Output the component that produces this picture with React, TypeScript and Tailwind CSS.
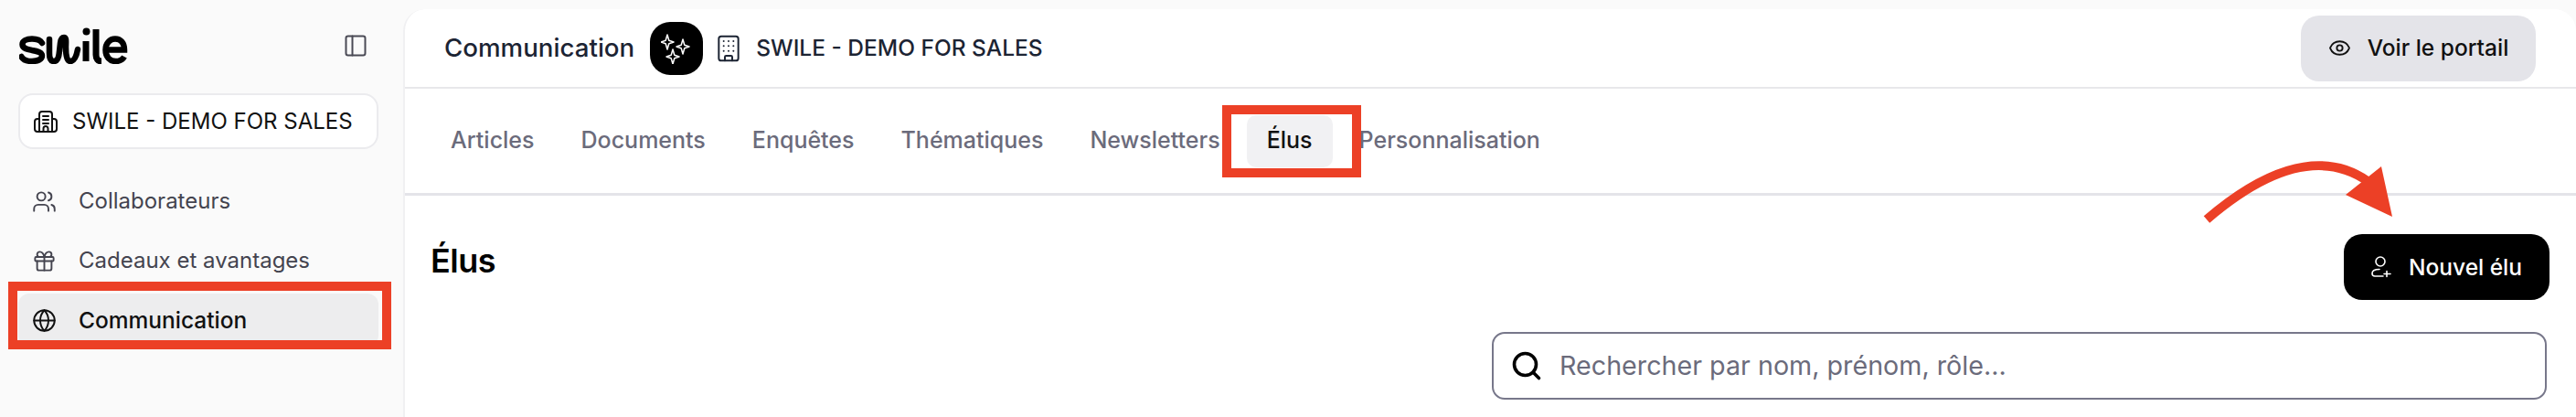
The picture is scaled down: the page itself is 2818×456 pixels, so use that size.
import { Users, Gift, Globe, Eye, Building, PanelLeft, Search } from "lucide-react";

function Logo() {
  return (
    <svg width="119" height="40" viewBox="0 0 119 40" fill="none" stroke="#000" strokeWidth="6.5" strokeLinecap="round">
      <path d="M25 17 C23 13.5 19 12.5 14 12.5 C8 12.5 3.5 14.5 3.5 18.5 C3.5 23 9 24 14 25 C20 26 25 27 25 31 C25 35 20 37 14 37 C9 37 4.5 35.5 2.5 32" />
      <path d="M33 13 L33 28 C33 34 35 37 38 37 C42 37 43.5 32 44 26 L45 17 C45.5 13 47 11 49 11 C52 11 51 16 51 22 C51 30 52 37 56 37 C60 37 62.5 32 64 24" />
      <path d="M73 15 L73 37" strokeLinecap="butt" strokeWidth="7" />
      <circle cx="73.5" cy="4.5" r="4" fill="#000" stroke="none" />
      <path d="M84 2 L84 30 C84 34 86 37 90 37" strokeLinecap="butt" strokeWidth="7" />
      <path d="M95 24.5 L115 24.5 C115 17 111 12.5 105 12.5 C99 12.5 94.5 17.5 94.5 24.5 C94.5 32 99 37 105.5 37 C110 37 113 35.5 115 32" strokeLinecap="butt" />
    </svg>
  );
}

function OrgIcon() {
  return (
    <svg width="26" height="24" viewBox="0 0 26 24" fill="none" stroke="#111" strokeWidth="2" strokeLinecap="round" strokeLinejoin="round">
      <path d="M6 23 V4 a3 3 0 0 1 3-3 h8 a3 3 0 0 1 3 3 V23" />
      <path d="M6 9 H4 a3 3 0 0 0-3 3 v8 a3 3 0 0 0 3 3 h18 a3 3 0 0 0 3-3 v-8 a3 3 0 0 0-3-3 h-2" />
      <path d="M10 6 h6 M10 10 h6 M10 14 h6 M10.5 23 v-3.5 a2.5 2.5 0 0 1 5 0 V23" />
    </svg>
  );
}

function Sparks() {
  const star = "M0 -8 L1.8 -1.8 L7 0 L1.8 1.8 L0 8 L-1.8 1.8 L-7 0 L-1.8 -1.8 Z";
  return (
    <svg width="34" height="34" viewBox="0 0 34 34" fill="none" stroke="#fff" strokeWidth="1.5" strokeLinejoin="round">
      <path d={star} transform="translate(7 10)" />
      <path d={star} transform="translate(24 15)" />
      <path d={star} transform="translate(13 26)" />
    </svg>
  );
}

function UserAdd() {
  return (
    <svg width="22" height="24" viewBox="0 0 22 24" fill="none" stroke="#fff" strokeWidth="1.6" strokeLinecap="round">
      <circle cx="10" cy="6" r="5" />
      <path d="M13 22 H4 C1.5 22 1 20.5 1 19 C1 16 4 14.5 9 14.5" />
      <path d="M17 16.5 V22.5 M14 19.5 H21" />
    </svg>
  );
}

const tabs = ["Articles", "Documents", "Enquêtes", "Thématiques", "Newsletters", "Élus", "Personnalisation"];

export default function App() {
  return (
    <div className="relative flex h-[456px] w-[2818px] overflow-hidden bg-[#fafafa] font-['Inter',sans-serif]">
      <aside className="flex w-[441px] shrink-0 flex-col pl-[20px] pr-[27px] pt-[30px]">
        <div className="flex h-[40px] items-center justify-between pl-px pr-[11px]">
          <Logo />
          <PanelLeft size={28} strokeWidth={1.7} className="text-[#4a4a55]" />
        </div>
        <button className="mt-[32px] flex h-[61px] items-center gap-[16px] rounded-[16px] border-2 border-[#ebebee] bg-white pl-[15px] text-[24px] text-[#111]">
          <OrgIcon />
          <span className="whitespace-nowrap">SWILE - DEMO FOR SALES</span>
        </button>
        <nav className="mt-[28px] flex flex-col gap-[7px] text-[24px]">
          <div className="flex h-[58px] items-center gap-[24px] pl-[15px] text-[#44444f]">
            <Users size={27} strokeWidth={1.7} />
            <span>Collaborateurs</span>
          </div>
          <div className="flex h-[58px] items-center gap-[24px] pl-[15px] text-[#44444f]">
            <Gift size={27} strokeWidth={1.7} />
            <span>Cadeaux et avantages</span>
          </div>
          <div className="flex h-[58px] items-center gap-[24px] rounded-[12px] bg-[#ededee] pl-[15px] text-[24.5px] font-medium text-[#111]">
            <Globe size={27} strokeWidth={1.7} />
            <span>Communication</span>
          </div>
        </nav>
      </aside>

      <main className="mt-[10px] flex flex-1 flex-col rounded-t-[24px] border-l-2 border-[#f0f0f2] bg-white">
        <header className="flex h-[87px] items-center justify-between border-b-2 border-[#e8e8ea] pl-[43px] pr-[44px]">
          <div className="flex items-center">
            <span className="text-[27.7px] font-medium text-[#1c2433]">Communication</span>
            <div className="ml-[17px] flex h-[58px] w-[58px] items-center justify-center rounded-[22px] bg-black">
              <Sparks />
            </div>
            <Building size={32} strokeWidth={1.5} className="ml-[12px] text-[#1c2433]" />
            <span className="ml-[14px] text-[24.5px] font-medium text-[#1c2433]">SWILE - DEMO FOR SALES</span>
          </div>
          <button className="flex h-[72px] w-[257px] items-center justify-center gap-[18px] rounded-[20px] bg-[#e4e4e9] text-[24.5px] font-medium text-[#111]">
            <Eye size={25} strokeWidth={1.8} />
            <span>Voir le portail</span>
          </button>
        </header>

        <div className="flex h-[117px] items-center gap-[7px] border-b-[3px] border-[#e4e4e9] pl-[28px] text-[25px] font-medium text-[#6b6b7b]">
          {tabs.map((t) => (
            <div
              key={t}
              className={
                t === "Élus"
                  ? "flex h-[57px] items-center rounded-[10px] bg-[#f1f1f3] px-[22px] text-[#111]"
                  : "flex h-[57px] items-center rounded-[10px] px-[22px]"
              }
            >
              {t}
            </div>
          ))}
        </div>

        <div className="flex items-start justify-between pl-[28px] pr-[29px] pt-[42px]">
          <h1 className="mt-[2px] text-[36px] font-semibold tracking-[-0.5px] text-black">Élus</h1>
          <button className="flex h-[72px] w-[225px] items-center justify-center gap-[19px] rounded-[20px] bg-black text-[24.5px] font-medium text-white">
            <UserAdd />
            <span>Nouvel élu</span>
          </button>
        </div>

        <div className="mr-[32px] mt-[35px] flex h-[74px] w-[1154px] items-center gap-[18px] self-end rounded-[14px] border-2 border-[#77778a] pl-[18px]">
          <Search size={36} strokeWidth={2.4} className="text-black" />
          <input
            readOnly
            placeholder="Rechercher par nom, prénom, rôle..."
            className="flex-1 bg-transparent text-[28.7px] outline-none placeholder:text-[#6b6b7b]"
          />
        </div>
      </main>

      {/* Annotations */}
      <div className="absolute left-[9px] top-[308px] h-[74px] w-[419px] border-[10px] border-[#ec4026]" />
      <div className="absolute left-[1337px] top-[115px] h-[79px] w-[152px] border-[10px] border-[#ec4026]" />
      <svg className="absolute left-[2400px] top-[170px]" width="230" height="80" viewBox="0 0 230 80" fill="none">
        <path d="M14 70 C70 22 135 -10 190 28" stroke="#ec4026" strokeWidth="10" />
        <path d="M217 67 L205 12 L166 43 Z" fill="#ec4026" />
      </svg>
    </div>
  );
}
